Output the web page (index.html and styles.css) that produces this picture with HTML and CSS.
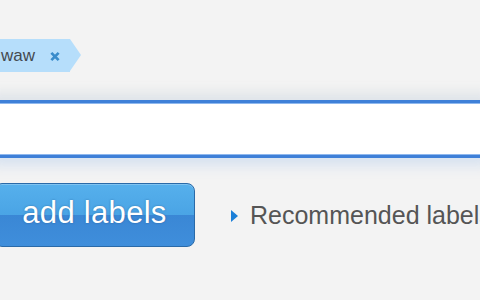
FILE: index.html
```html
<!DOCTYPE html>
<html>
<head>
<meta charset="utf-8">
<link rel="stylesheet" href="styles.css">
</head>
<body>
<div class="page">
  <div class="tags">
    <span class="tag">
      <span class="tag-text">waw</span>
      <svg class="tag-x" width="11" height="11" viewBox="0 0 11 11"><path d="M1.5 1.5 L9.5 9.5 M9.5 1.5 L1.5 9.5" stroke="#3a8ccb" stroke-width="3" stroke-linecap="butt"/></svg>
    </span>
  </div>
  <div class="field"><input class="field-input" type="text"></div>
  <div class="actions">
    <button class="btn">add labels</button>
    <span class="rec">
      <svg class="rec-arrow" width="7" height="12" viewBox="0 0 7 12"><path d="M0 0 L7 6 L0 12 Z" fill="#1b7fd8"/></svg>
      <span class="rec-text">Recommended labels</span>
    </span>
  </div>
</div>
</body>
</html>
```

FILE: styles.css
```css
html, body {
  margin: 0;
  padding: 0;
  background: #f3f3f3;
  overflow: hidden;
}
.page {
  width: 480px;
  height: 300px;
  overflow: hidden;
  font-family: "Liberation Sans", Arial, sans-serif;
}
.tags {
  padding-top: 39px;
  height: 33px;
}
.tag {
  position: relative;
  display: inline-flex;
  align-items: center;
  height: 33px;
  margin-left: -30px;
  padding-left: 30px;
  padding-right: 10px;
  width: 60px;
  background: #b6defb;
}
.tag::after {
  content: "";
  position: absolute;
  right: -11px;
  top: 0;
  border-top: 16.5px solid transparent;
  border-bottom: 16.5px solid transparent;
  border-left: 11px solid #b6defb;
}
.tag-text {
  font-size: 17px;
  color: #444a50;
  margin-left: 1px;
}
.tag-x {
  margin-left: 15px;
  margin-top: 1px;
}
.field {
  margin: 28px -10px 0;
  height: 58px;
  box-shadow: 0 -8px 10px rgba(170, 185, 205, 0.22), 0 8px 12px rgba(110, 165, 235, 0.2);
}
.field-input {
  display: block;
  box-sizing: border-box;
  width: 100%;
  height: 58px;
  margin: 0;
  padding: 0 10px;
  border: none;
  border-top: 3px solid #3f80d8;
  border-bottom: 3px solid #3f80d8;
  background: #fff;
  outline: none;
  box-shadow: inset 0 1px 0 #8fb8ee, inset 0 -1px 0 #8fb8ee;
}
.actions {
  display: flex;
  align-items: center;
  margin-top: 25px;
}
.btn {
  flex-shrink: 0;
  box-sizing: border-box;
  width: 201px;
  height: 64px;
  margin-left: -6px;
  border: 1px solid #2a6aa8;
  border-radius: 8px;
  background: linear-gradient(#56b0ec, #4aa4e5 50%, #3a87d5 50%, #3f8edb);
  box-shadow: inset 0 1px 0 rgba(255,255,255,0.25);
  color: #fff;
  font-family: "Liberation Sans", Arial, sans-serif;
  font-size: 31px;
  letter-spacing: 0.3px;
  text-shadow: 0 0 2px rgba(20, 60, 110, 0.5);
  padding: 0 0 4px;
}
.rec {
  flex-shrink: 0;
  display: flex;
  align-items: center;
  margin-left: 36px;
}
.rec-arrow {
  margin-top: 1px;
}
.rec-text {
  margin-left: 12px;
  font-size: 25px;
  color: #555;
  white-space: nowrap;
}
```
